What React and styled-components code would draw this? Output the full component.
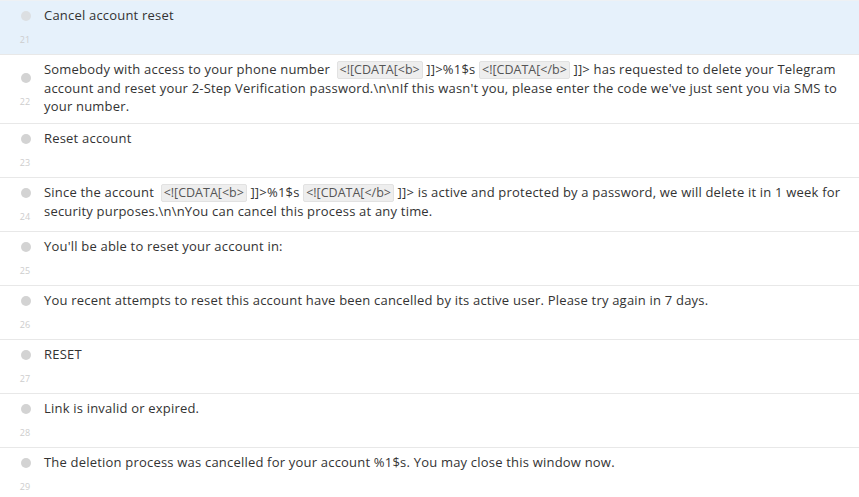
import React from "react";
import styled, { createGlobalStyle } from "styled-components";

const GlobalStyle = createGlobalStyle`
  html, body {
    margin: 0;
    padding: 0;
    background: #fff;
  }
  body {
    font-family: "Open Sans", "Liberation Sans", sans-serif;
    color: #333;
  }
`;

const rows = [
  { id: 21, active: true, text: ["Cancel account reset"] },
  {
    id: 22,
    text: [
      "Somebody with access to your phone number ",
      { tag: "<![CDATA[<b>", wide: true },
      " ]]>%1$s ",
      { tag: "<![CDATA[</b>" },
      " ]]> has requested to delete your Telegram account and reset your 2-Step Verification password.\\n\\nIf this wasn't you, please enter the code we've just sent you via SMS to your number.",
    ],
  },
  { id: 23, text: ["Reset account"] },
  {
    id: 24,
    text: [
      "Since the account ",
      { tag: "<![CDATA[<b>", wide: true },
      " ]]>%1$s ",
      { tag: "<![CDATA[</b>" },
      " ]]> is active and protected by a password, we will delete it in 1 week for security purposes.\\n\\nYou can cancel this process at any time.",
    ],
  },
  { id: 25, text: ["You'll be able to reset your account in:"] },
  {
    id: 26,
    text: [
      "You recent attempts to reset this account have been cancelled by its active user. Please try again in 7 days.",
    ],
  },
  { id: 27, text: ["RESET"] },
  { id: 28, text: ["Link is invalid or expired."] },
  {
    id: 29,
    text: [
      "The deletion process was cancelled for your account %1$s. You may close this window now.",
    ],
  },
];

const App = () => {
  return (
    <>
      <GlobalStyle />
      <List>
        {rows.map((row) => (
          <Row key={row.id} $active={row.active}>
            <Gutter>
              <Dot $active={row.active} />
              <Num>{row.id}</Num>
            </Gutter>
            <Text>
              {row.text.map((part, i) =>
                typeof part === "string" ? (
                  <React.Fragment key={i}>{part}</React.Fragment>
                ) : (
                  <Tag key={i} $wide={part.wide}>
                    {part.tag}
                  </Tag>
                )
              )}
            </Text>
          </Row>
        ))}
      </List>
    </>
  );
};

const List = styled.div`
  display: flex;
  flex-direction: column;
  border-top: 1px solid #eef1f4;
`;

const Row = styled.div`
  display: flex;
  min-height: 54px;
  box-sizing: border-box;
  border-bottom: 1px solid #e8e8e8;
  background: ${(p) => (p.$active ? "#e6f1fb" : "#fff")};
`;

const Gutter = styled.div`
  width: 44px;
  flex-shrink: 0;
  display: flex;
  flex-direction: column;
  justify-content: center;
  align-items: center;
  gap: 14px;
  padding-left: 8px;
  box-sizing: border-box;
`;

const Dot = styled.div`
  width: 10px;
  height: 10px;
  border-radius: 50%;
  background: ${(p) => (p.$active ? "#dcdfe2" : "#d3d3d3")};
`;

const Num = styled.div`
  font-size: 9px;
  line-height: 9px;
  color: #cdcdcd;
  margin-left: -2px;
`;

const Text = styled.div`
  flex: 1;
  padding: 5px 14px 8px 0;
  font-size: 13px;
  line-height: 18px;
  letter-spacing: 0.2px;
`;

const Tag = styled.span`
  display: inline-block;
  background: #eeeeee;
  border: 1px solid #e2e2e2;
  border-radius: 2px;
  padding: 0 2px;
  margin-left: ${(p) => (p.$wide ? "3px" : "0")};
  font-size: 12.5px;
  line-height: 16px;
  letter-spacing: 0;
  color: #555;
`;

export default App;
